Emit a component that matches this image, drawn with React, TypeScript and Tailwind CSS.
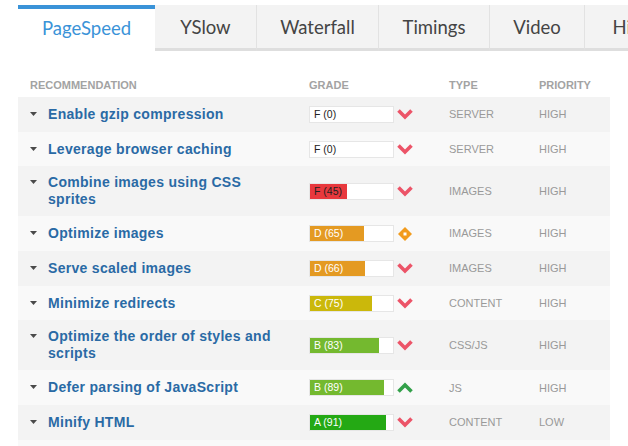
import React from 'react'

type Mark = 'down' | 'up' | 'diamond'

type Rule = {
  name: string
  grade: string
  score: number
  fill: string
  dark?: boolean
  mark: Mark
  type: string
  priority: string
  tall?: boolean
}

const rules: Rule[] = [
  { name: 'Enable gzip compression', grade: 'F', score: 0, fill: 'bg-[#e8383d]', dark: true, mark: 'down', type: 'SERVER', priority: 'HIGH' },
  { name: 'Leverage browser caching', grade: 'F', score: 0, fill: 'bg-[#e8383d]', dark: true, mark: 'down', type: 'SERVER', priority: 'HIGH' },
  { name: 'Combine images using CSS sprites', grade: 'F', score: 45, fill: 'bg-[#e8383d]', dark: true, mark: 'down', type: 'IMAGES', priority: 'HIGH', tall: true },
  { name: 'Optimize images', grade: 'D', score: 65, fill: 'bg-[#e49a22]', mark: 'diamond', type: 'IMAGES', priority: 'HIGH' },
  { name: 'Serve scaled images', grade: 'D', score: 66, fill: 'bg-[#e49a22]', mark: 'down', type: 'IMAGES', priority: 'HIGH' },
  { name: 'Minimize redirects', grade: 'C', score: 75, fill: 'bg-[#cbb80b]', mark: 'down', type: 'CONTENT', priority: 'HIGH' },
  { name: 'Optimize the order of styles and scripts', grade: 'B', score: 83, fill: 'bg-[#74b92f]', mark: 'down', type: 'CSS/JS', priority: 'HIGH', tall: true },
  { name: 'Defer parsing of JavaScript', grade: 'B', score: 89, fill: 'bg-[#74b92f]', mark: 'up', type: 'JS', priority: 'HIGH' },
  { name: 'Minify HTML', grade: 'A', score: 91, fill: 'bg-[#24a914]', mark: 'down', type: 'CONTENT', priority: 'LOW' },
]

const tabs = [
  { label: 'PageSpeed', w: 'w-[137px]' },
  { label: 'YSlow', w: 'w-[101px]' },
  { label: 'Waterfall', w: 'w-[122px]' },
  { label: 'Timings', w: 'w-[111px]' },
  { label: 'Video', w: 'w-[95px]' },
  { label: 'History', w: 'w-[116px]' },
]

function MarkIcon({ mark }: { mark: Mark }) {
  if (mark === 'diamond') {
    return (
      <svg width="16" height="16" viewBox="0 0 16 16">
        <path d="M8 1 L15 8 L8 15 L1 8 Z" fill="#f29b1d" />
        <rect x="6.5" y="6.5" width="3" height="3" fill="#fff" />
      </svg>
    )
  }
  if (mark === 'up') {
    return (
      <svg width="16" height="16" viewBox="0 0 16 16">
        <path d="M1.5 11.5 L8 5 L14.5 11.5" fill="none" stroke="#33a04a" strokeWidth="3.6" />
      </svg>
    )
  }
  return (
    <svg width="16" height="16" viewBox="0 0 16 16">
      <path d="M1.5 4.5 L8 11 L14.5 4.5" fill="none" stroke="#ec5468" strokeWidth="3.6" />
    </svg>
  )
}

function GradeBar({ r }: { r: Rule }) {
  return (
    <div className="relative h-[17px] w-[85px] border border-[#e6e6e6] bg-white">
      <div className={`h-full ${r.fill}`} style={{ width: `${r.score}%` }} />
      <span
        className={`absolute left-[4px] top-0 text-[10.5px] leading-[15px] ${
          r.dark ? 'text-[#222]' : 'text-white'
        }`}
      >
        {r.grade} ({r.score})
      </span>
    </div>
  )
}

export default function App() {
  return (
    <div className="h-[446px] w-[628px] overflow-hidden bg-white font-['Liberation_Sans',Arial,sans-serif]">
      <div className="ml-[18px] mt-[5px] flex h-[46px]">
        {tabs.map((t, i) =>
          i === 0 ? (
            <div
              key={t.label}
              className={`${t.w} flex shrink-0 items-center justify-center border-t-4 border-[#3a93d8] bg-white pb-[2px] font-['Lato',sans-serif] text-[18.5px] text-[#3a93d8]`}
            >
              {t.label}
            </div>
          ) : (
            <div
              key={t.label}
              className={`${t.w} flex shrink-0 items-center justify-center border-b-[3px] border-l border-b-[#dedede] border-l-[#e2e2e2] bg-[#f3f3f3] pt-[3px] font-['Lato',sans-serif] text-[18.5px] text-[#444] ${
                i === 1 ? 'border-l-0' : ''
              }`}
            >
              {t.label}
            </div>
          ),
        )}
      </div>

      <div className="mx-[18px] mt-[22px]">
        <div className="flex h-[24px] items-center text-[11px] font-bold text-[#a3a3a3]">
          <div className="w-[291px] pl-[12px]">RECOMMENDATION</div>
          <div className="w-[140px]">GRADE</div>
          <div className="w-[90px]">TYPE</div>
          <div>PRIORITY</div>
        </div>

        {rules.map((r, i) => (
          <div
            key={r.name}
            className={`flex items-center ${r.tall ? 'h-[50px]' : 'h-[34.7px]'} ${
              i % 2 === 0 ? 'bg-[#f3f3f3]' : 'bg-[#f9f9f9]'
            }`}
          >
            <div className="flex w-[291px] items-start pl-[12px]">
              <svg width="7" height="4" viewBox="0 0 7 4" className="mr-[11px] mt-[6px] shrink-0">
                <path d="M0 0 H7 L3.5 4 Z" fill="#4a4a4a" />
              </svg>
              <span className="w-[235px] text-[14px] font-bold leading-[17px] tracking-[0.3px] text-[#2a6aa5]">
                {r.name}
              </span>
            </div>
            <div className="flex w-[140px] items-center">
              <GradeBar r={r} />
              <span className="ml-[3px]">
                <MarkIcon mark={r.mark} />
              </span>
            </div>
            <div className="w-[90px] text-[11px] text-[#999]">{r.type}</div>
            <div className="text-[11px] text-[#999]">{r.priority}</div>
          </div>
        ))}
        <div className="h-[10px] bg-[#f9f9f9]" />
      </div>
    </div>
  )
}
